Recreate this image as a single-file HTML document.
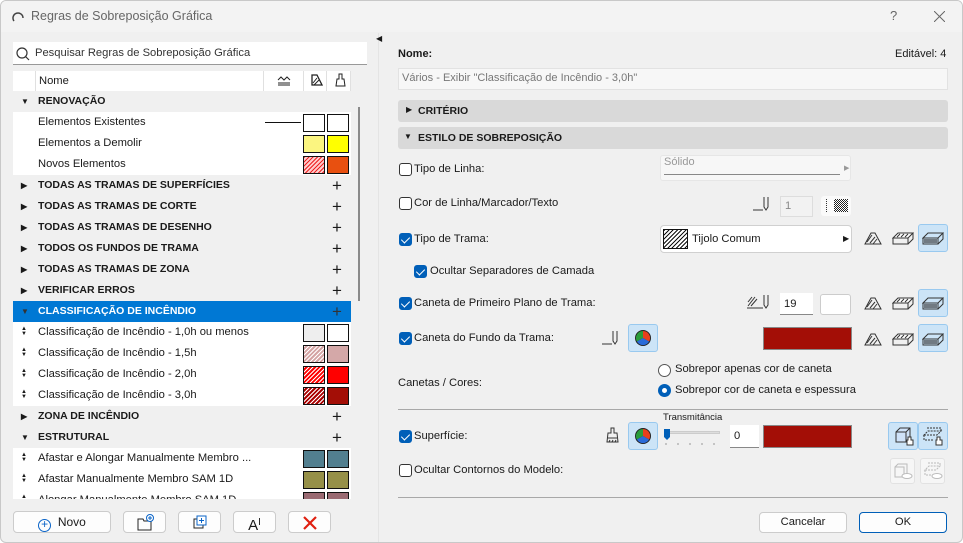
<!DOCTYPE html>
<html><head><meta charset="utf-8"><style>
*{box-sizing:border-box;margin:0;padding:0}
body{width:963px;height:543px;overflow:hidden;background:#fff;font-family:"Liberation Sans",sans-serif;font-size:11.2px;color:#1a1a1a}
.win{position:absolute;left:0;top:0;width:963px;height:543px;background:#f0f0f0;border:1px solid #c8c8c8;border-radius:6px;overflow:hidden}
.a{position:absolute}
.row{position:absolute;left:12px;width:338px;height:21px;line-height:21px}
.g{background:#f0f0f0;font-weight:bold;font-size:10.5px}
.c{background:#fff}
.sel{background:#0078d4;color:#fff;font-weight:bold;font-size:10.5px}
.tri{position:absolute;left:8px;top:0;font-size:8px}
.lbl{position:absolute;left:25px}
.plus{position:absolute;left:319px;top:0;font-size:17px;font-weight:normal}
.sw{position:absolute;top:2px;width:22px;height:18px;border:1px solid #111}
.s1{left:290px}.s2{left:314px}
.ud{position:absolute;left:8px;top:5px;font-size:6px;line-height:5px}
.cb{position:absolute;width:13px;height:13px;border:1px solid #333;border-radius:3px;background:#fff}
.ck{background:#005fb8;border-color:#005fb8}
.ck::after{content:"";position:absolute;left:3px;top:1px;width:4px;height:7px;border:solid #fff;border-width:0 1.5px 1.5px 0;transform:rotate(45deg)}
.t{position:absolute;white-space:nowrap}
.btn{position:absolute;background:#fdfdfd;border:1px solid #ccc;border-radius:4px;text-align:center}
.hl{position:absolute;width:30px;height:28px;background:#cce4f7;border:1px solid #99c9ef;border-radius:3px}
.hatch{background:repeating-linear-gradient(135deg,#111 0 1px,#fff 1px 3px)}
</style></head><body><div class="win">

<div class="a" style="left:0;top:0;width:963px;height:31px;background:#f3f3f3"></div>
<svg class="a" style="left:11px;top:9px" width="12" height="12"><path d="M2 11 A5 5 0 1 1 11 8" fill="none" stroke="#444" stroke-width="1.5"/></svg>
<div class="t" style="left:30px;top:8px;font-size:12.5px;color:#666">Regras de Sobreposição Gráfica</div>
<div class="t" style="left:889px;top:7px;font-size:13px;color:#666">?</div>
<svg class="a" style="left:933px;top:10px" width="11" height="11"><path d="M0 0L11 11M11 0L0 11" stroke="#666" stroke-width="1"/></svg>

<div class="a" style="left:12px;top:41px;width:354px;height:23px;background:#fff;border-bottom:1px solid #999"></div>
<svg class="a" style="left:15px;top:46px" width="14" height="14"><circle cx="6" cy="6" r="5" fill="none" stroke="#333" stroke-width="1.2"/><path d="M9.5 9.5L13 13" stroke="#333" stroke-width="1.2"/></svg>
<div class="t" style="left:34px;top:46px;color:#333">Pesquisar Regras de Sobreposição Gráfica</div>

<div class="a" style="left:12px;top:70px;width:338px;height:20px;background:#fff"></div>
<div class="a" style="left:34px;top:70px;width:1px;height:20px;background:#e0e0e0"></div>
<div class="a" style="left:262px;top:70px;width:1px;height:20px;background:#e0e0e0"></div>
<div class="a" style="left:302px;top:70px;width:1px;height:20px;background:#e0e0e0"></div>
<div class="a" style="left:325px;top:70px;width:1px;height:20px;background:#e0e0e0"></div>
<div class="a" style="left:349px;top:70px;width:1px;height:20px;background:#e0e0e0"></div>
<div class="t" style="left:38px;top:74px">Nome</div>
<svg class="a" style="left:276px;top:74px" width="14" height="11"><path d="M1 5L4 2 7 5 10 2 13 5M1 8H13M1 10H13" fill="none" stroke="#222"/></svg>
<svg class="a" style="left:310px;top:73px" width="12" height="12"><path d="M1 11V1H6L11 11Z" fill="none" stroke="#222" stroke-width="1.3"/><path d="M2 9L6 4M3 11L8 6" stroke="#222"/></svg>
<svg class="a" style="left:334px;top:72px" width="11" height="14"><path d="M4 1H7V6H9L10 13H1L2 6H4Z" fill="none" stroke="#222"/></svg>

<div class="row g" style="top:90px"><span class="tri">▼</span><span class="lbl">RENOVAÇÃO</span></div>
<div class="row c" style="top:111px"><span class="lbl">Elementos Existentes</span><div class="a" style="left:252px;top:10px;width:36px;height:1px;background:#111"></div><div class="sw s1"></div><div class="sw s2"></div></div>
<div class="row c" style="top:132px"><span class="lbl">Elementos a Demolir</span><div class="sw s1" style="background:#fbf580"></div><div class="sw s2" style="background:#ffff00"></div></div>
<div class="row c" style="top:153px"><span class="lbl">Novos Elementos</span><div class="sw s1" style="background:repeating-linear-gradient(135deg,#e22 0 1px,#fcc 1px 3px)"></div><div class="sw s2" style="background:#e85010"></div></div>
<div class="row g" style="top:174px"><span class="tri">▶</span><span class="lbl">TODAS AS TRAMAS DE SUPERFÍCIES</span><span class="plus">+</span></div>
<div class="row g" style="top:195px"><span class="tri">▶</span><span class="lbl">TODAS AS TRAMAS DE CORTE</span><span class="plus">+</span></div>
<div class="row g" style="top:216px"><span class="tri">▶</span><span class="lbl">TODAS AS TRAMAS DE DESENHO</span><span class="plus">+</span></div>
<div class="row g" style="top:237px"><span class="tri">▶</span><span class="lbl">TODOS OS FUNDOS DE TRAMA</span><span class="plus">+</span></div>
<div class="row g" style="top:258px"><span class="tri">▶</span><span class="lbl">TODAS AS TRAMAS DE ZONA</span><span class="plus">+</span></div>
<div class="row g" style="top:279px"><span class="tri">▶</span><span class="lbl">VERIFICAR ERROS</span><span class="plus">+</span></div>
<div class="row sel" style="top:300px"><span class="tri" style="color:#333">▼</span><span class="lbl">CLASSIFICAÇÃO DE INCÊNDIO</span><span class="plus" style="color:#333">+</span></div>
<div class="row c" style="top:321px"><span class="ud">▲<br>▼</span><span class="lbl">Classificação de Incêndio - 1,0h ou menos</span><div class="sw s1" style="background:#eee"></div><div class="sw s2"></div></div>
<div class="row c" style="top:342px"><span class="ud">▲<br>▼</span><span class="lbl">Classificação de Incêndio - 1,5h</span><div class="sw s1" style="background:repeating-linear-gradient(135deg,#fff 0 1px,#d4a4a4 1px 3px)"></div><div class="sw s2" style="background:#d4a8a8"></div></div>
<div class="row c" style="top:363px"><span class="ud">▲<br>▼</span><span class="lbl">Classificação de Incêndio - 2,0h</span><div class="sw s1" style="background:repeating-linear-gradient(135deg,#fff 0 1px,#f00 1px 3px)"></div><div class="sw s2" style="background:#f00"></div></div>
<div class="row c" style="top:384px"><span class="ud">▲<br>▼</span><span class="lbl">Classificação de Incêndio - 3,0h</span><div class="sw s1" style="background:repeating-linear-gradient(135deg,#fff 0 1px,#a00 1px 3px)"></div><div class="sw s2" style="background:#a30e06"></div></div>
<div class="row g" style="top:405px"><span class="tri">▶</span><span class="lbl">ZONA DE INCÊNDIO</span><span class="plus">+</span></div>
<div class="row g" style="top:426px"><span class="tri">▼</span><span class="lbl">ESTRUTURAL</span><span class="plus">+</span></div>
<div class="row c" style="top:447px"><span class="ud">▲<br>▼</span><span class="lbl">Afastar e Alongar Manualmente Membro ...</span><div class="sw s1" style="background:#527f8f"></div><div class="sw s2" style="background:#527f8f"></div></div>
<div class="row c" style="top:468px"><span class="ud">▲<br>▼</span><span class="lbl">Afastar Manualmente Membro SAM 1D</span><div class="sw s1" style="background:#969048"></div><div class="sw s2" style="background:#969048"></div></div>
<div class="a" style="left:12px;top:489px;width:338px;height:9px;overflow:hidden"><div class="row c" style="left:0;top:0"><span class="ud">▲<br>▼</span><span class="lbl">Alongar Manualmente Membro SAM 1D</span><div class="sw s1" style="background:#9a6a72"></div><div class="sw s2" style="background:#9a6a72"></div></div></div>
<div class="a" style="left:357px;top:106px;width:2px;height:194px;background:#8a8a8a"></div>

<div class="btn" style="left:12px;top:510px;width:98px;height:22px;line-height:20px;font-size:12px"><span style="display:inline-block;width:13px;height:13px;border:1.3px solid #0a64c8;border-radius:50%;color:#0a64c8;font-size:12px;line-height:9px;vertical-align:-2px">+</span>&nbsp; Novo</div>
<div class="btn" style="left:122px;top:510px;width:43px;height:22px"><svg width="20" height="18" style="margin-top:1px"><path d="M3 6H8L9 8H16V17H3Z" fill="none" stroke="#222"/><circle cx="15" cy="5" r="3.5" fill="#fff" stroke="#0a64c8"/><path d="M15 3V7M13 5H17" stroke="#0a64c8"/></svg></div>
<div class="btn" style="left:177px;top:510px;width:43px;height:22px"><svg width="18" height="18" style="margin-top:1px"><rect x="3" y="6" width="9" height="9" fill="none" stroke="#222"/><rect x="6" y="3" width="9" height="9" fill="#fff" stroke="#0a64c8"/><path d="M10.5 5V10M8 7.5H13" stroke="#0a64c8"/></svg></div>
<div class="btn" style="left:232px;top:510px;width:43px;height:22px;font-size:15px;line-height:22px">A<span style="font-size:10px;vertical-align:5px">I</span></div>
<div class="btn" style="left:287px;top:510px;width:43px;height:22px"><svg width="16" height="16" style="margin-top:3px"><path d="M2 2L14 14M14 2L2 14" stroke="#e02010" stroke-width="2.2"/></svg></div>

<div class="a" style="left:377px;top:32px;width:1px;height:511px;background:#e4e4e4"></div>
<div class="t" style="left:375px;top:33px;font-size:8px">◀</div>

<div class="t" style="left:397px;top:47px;font-weight:bold;font-size:11px">Nome:</div>
<div class="t" style="left:894px;top:47px;font-size:11px">Editável: 4</div>
<div class="a" style="left:397px;top:67px;width:550px;height:22px;background:#f7f7f7;border:1px solid #e2e2e2"></div>
<div class="t" style="left:401px;top:71px;color:#777;font-size:11px">Vários - Exibir "Classificação de Incêndio - 3,0h"</div>
<div class="a" style="left:397px;top:99px;width:550px;height:22px;background:#d9d9d9;border-radius:3px"></div>
<div class="t" style="left:405px;top:104px;font-size:8px">▶</div>
<div class="t" style="left:417px;top:104px;font-weight:bold;font-size:10.5px">CRITÉRIO</div>
<div class="a" style="left:397px;top:126px;width:550px;height:22px;background:#d9d9d9;border-radius:3px"></div>
<div class="t" style="left:403px;top:131px;font-size:8px">▼</div>
<div class="t" style="left:417px;top:131px;font-weight:bold;font-size:10.5px">ESTILO DE SOBREPOSIÇÃO</div>

<div class="cb" style="left:398px;top:162px"></div><div class="t" style="left:413px;top:162px">Tipo de Linha:</div>
<div class="a" style="left:659px;top:154px;width:191px;height:26px;background:#f7f7f7;border:1px solid #e6e6e6;border-radius:3px"></div>
<div class="t" style="left:663px;top:155px;color:#999;font-size:11px">Sólido</div>
<div class="a" style="left:663px;top:173px;width:176px;height:1px;background:#888"></div>
<div class="t" style="left:843px;top:163px;font-size:7px;color:#999">▶</div>

<div class="cb" style="left:398px;top:196px"></div><div class="t" style="left:413px;top:196px">Cor de Linha/Marcador/Texto</div>
<svg class="a" style="left:752px;top:195px" width="20" height="16"><path d="M0 14H10M11 1V11L13 14 15 11V1" fill="none" stroke="#333"/></svg>
<div class="a" style="left:779px;top:195px;width:33px;height:21px;background:#f2f2f2;border:1px solid #ddd"></div>
<div class="t" style="left:784px;top:199px;color:#888">1</div>
<div class="a" style="left:820px;top:195px;width:30px;height:20px;background:#fafafa;border-radius:3px"></div>
<div class="a" style="left:825px;top:198px;width:1px;height:13px;border-left:1px dotted #333"></div>
<div class="a" style="left:833px;top:198px;width:14px;height:13px;background:repeating-conic-gradient(#222 0 25%,#fff 0 50%) 0 0/2px 2px"></div>

<div class="cb ck" style="left:398px;top:232px"></div><div class="t" style="left:413px;top:232px">Tipo de Trama:</div>
<div class="a" style="left:659px;top:224px;width:192px;height:28px;background:#fff;border:1px solid #d0d0d0;border-radius:4px"></div>
<div class="a hatch" style="left:662px;top:228px;width:25px;height:20px;border:1px solid #111"></div>
<div class="t" style="left:691px;top:232px">Tijolo Comum</div>
<div class="t" style="left:842px;top:233px;font-size:8px">▶</div>

<div class="cb ck" style="left:413px;top:264px"></div><div class="t" style="left:429px;top:264px">Ocultar Separadores de Camada</div>

<div class="cb ck" style="left:398px;top:296px"></div><div class="t" style="left:413px;top:296px">Caneta de Primeiro Plano de Trama:</div>
<svg class="a" style="left:746px;top:293px" width="30" height="16"><path d="M1 8L5 3M1 12L8 3M4 12L10 5M0 14H16M17 1V11L19 14 21 11V1" fill="none" stroke="#333"/></svg>
<div class="a" style="left:779px;top:292px;width:33px;height:22px;background:#fff;border-bottom:1px solid #888"></div>
<div class="t" style="left:783px;top:297px">19</div>
<div class="a" style="left:819px;top:293px;width:31px;height:21px;background:#fff;border:1px solid #ccc;border-radius:3px"></div>

<div class="cb ck" style="left:398px;top:331px"></div><div class="t" style="left:413px;top:331px">Caneta do Fundo da Trama:</div>
<svg class="a" style="left:601px;top:329px" width="22" height="16"><path d="M0 14H10M11 1V11L13 14 15 11V1" fill="none" stroke="#333"/></svg>
<div class="hl" style="left:627px;top:323px"></div>
<svg class="a" style="left:633px;top:328px" width="18" height="18"><circle cx="9" cy="9" r="8" fill="#222"/><path d="M9 9V2A7 7 0 0 0 2.9 12.5Z" fill="#2a9d3a"/><path d="M9 9V2A7 7 0 0 1 15.1 12.5Z" fill="#e8401c"/><path d="M9 9L15.1 12.5A7 7 0 0 1 2.9 12.5Z" fill="#2a6bd8"/></svg>
<div class="a" style="left:762px;top:326px;width:89px;height:23px;background:#a30e06;border:1px solid #888"></div>

<svg class="a" style="left:862px;top:229px" width="20" height="16"><path d="M2 14L8 3H12L18 14Z" fill="none" stroke="#333"/><path d="M4 12L9 5M7 13L12 7M10 14L14 9" stroke="#333"/></svg>
<svg class="a" style="left:891px;top:231px" width="22" height="13"><path d="M1 6H16L21 1H6Z" fill="#fff" stroke="#333"/><path d="M1 6V12H16V6M16 12L21 7V1" fill="none" stroke="#333"/><path d="M5 5L8 2M9 5L12 2M13 5L16 2" stroke="#333"/></svg>
<div class="hl" style="left:917px;top:223px"></div>
<svg class="a" style="left:921px;top:231px" width="22" height="13"><path d="M1 6H16L21 1H6Z" fill="none" stroke="#333"/><path d="M1 6V12H16V6M16 12L21 7V1" fill="none" stroke="#333"/><rect x="2" y="7" width="13" height="4" fill="#333" opacity=".6"/></svg>

<svg class="a" style="left:862px;top:294px" width="20" height="16"><path d="M2 14L8 3H12L18 14Z" fill="none" stroke="#333"/><path d="M4 12L9 5M7 13L12 7M10 14L14 9" stroke="#333"/></svg>
<svg class="a" style="left:891px;top:296px" width="22" height="13"><path d="M1 6H16L21 1H6Z" fill="#fff" stroke="#333"/><path d="M1 6V12H16V6M16 12L21 7V1" fill="none" stroke="#333"/><path d="M5 5L8 2M9 5L12 2M13 5L16 2" stroke="#333"/></svg>
<div class="hl" style="left:917px;top:288px"></div>
<svg class="a" style="left:921px;top:296px" width="22" height="13"><path d="M1 6H16L21 1H6Z" fill="none" stroke="#333"/><path d="M1 6V12H16V6M16 12L21 7V1" fill="none" stroke="#333"/><rect x="2" y="7" width="13" height="4" fill="#333" opacity=".6"/></svg>

<svg class="a" style="left:862px;top:330px" width="20" height="16"><path d="M2 14L8 3H12L18 14Z" fill="none" stroke="#333"/><path d="M4 12L9 5M7 13L12 7M10 14L14 9" stroke="#333"/></svg>
<svg class="a" style="left:891px;top:332px" width="22" height="13"><path d="M1 6H16L21 1H6Z" fill="#fff" stroke="#333"/><path d="M1 6V12H16V6M16 12L21 7V1" fill="none" stroke="#333"/><path d="M5 5L8 2M9 5L12 2M13 5L16 2" stroke="#333"/></svg>
<div class="hl" style="left:917px;top:323px"></div>
<svg class="a" style="left:921px;top:332px" width="22" height="13"><path d="M1 6H16L21 1H6Z" fill="none" stroke="#333"/><path d="M1 6V12H16V6M16 12L21 7V1" fill="none" stroke="#333"/><rect x="2" y="7" width="13" height="4" fill="#333" opacity=".6"/></svg>

<div class="t" style="left:397px;top:376px">Canetas / Cores:</div>
<div class="a" style="left:657px;top:363px;width:13px;height:13px;border:1px solid #555;border-radius:50%;background:#fff"></div>
<div class="t" style="left:674px;top:362px">Sobrepor apenas cor de caneta</div>
<div class="a" style="left:657px;top:383px;width:13px;height:13px;border-radius:50%;background:#005fb8"></div>
<div class="a" style="left:661px;top:387px;width:5px;height:5px;border-radius:50%;background:#fff"></div>
<div class="t" style="left:674px;top:383px">Sobrepor cor de caneta e espessura</div>
<div class="a" style="left:397px;top:408px;width:550px;height:1px;background:#a8a8a8"></div>

<div class="cb ck" style="left:398px;top:429px"></div><div class="t" style="left:413px;top:429px">Superfície:</div>
<svg class="a" style="left:604px;top:426px" width="16" height="17"><path d="M6 1H9V6H12L13 15H2L3 6H6Z" fill="none" stroke="#333"/><path d="M3 11H12M4 15L5 13M7 15L8 13M10 15L11 13" stroke="#333"/></svg>
<div class="hl" style="left:627px;top:421px"></div>
<svg class="a" style="left:633px;top:426px" width="18" height="18"><circle cx="9" cy="9" r="8" fill="#222"/><path d="M9 9V2A7 7 0 0 0 2.9 12.5Z" fill="#2a9d3a"/><path d="M9 9V2A7 7 0 0 1 15.1 12.5Z" fill="#e8401c"/><path d="M9 9L15.1 12.5A7 7 0 0 1 2.9 12.5Z" fill="#2a6bd8"/></svg>
<div class="t" style="left:662px;top:411px;font-size:9.5px">Transmitância</div>
<div class="a" style="left:663px;top:430px;width:56px;height:3px;background:#ddd;border:1px solid #ccc"></div>
<svg class="a" style="left:662px;top:427px" width="60" height="18"><path d="M1 1H7V9L4 12 1 9Z" fill="#005fb8"/><path d="M3 15V17M15 15V17M27 15V17M39 15V17M51 15V17" stroke="#999"/></svg>
<div class="a" style="left:729px;top:424px;width:29px;height:23px;background:#fff;border-bottom:1px solid #888"></div>
<div class="t" style="left:733px;top:429px">0</div>
<div class="a" style="left:762px;top:424px;width:89px;height:23px;background:#a30e06;border:1px solid #888"></div>
<div class="hl" style="left:887px;top:421px"></div>
<svg class="a" style="left:892px;top:425px" width="22" height="20"><path d="M3 6H13V16H3Z M3 6L7 2H17V12L13 16 M13 6L17 2" fill="#cfe2f8" stroke="#333"/><path d="M15 11H18V14H20V19H14V14H15Z" fill="#fff" stroke="#333"/></svg>
<div class="hl" style="left:917px;top:421px"></div>
<svg class="a" style="left:921px;top:425px" width="22" height="20"><path d="M2 9H15L19 5H6Z M2 9V14H12 M5 2H19V5" fill="none" stroke="#333" stroke-dasharray="2 1"/><path d="M15 11H18V14H20V19H14V14H15Z" fill="#fff" stroke="#333"/></svg>

<div class="cb" style="left:398px;top:463px"></div><div class="t" style="left:413px;top:463px">Ocultar Contornos do Modelo:</div>
<div class="a" style="left:889px;top:457px;width:25px;height:26px;background:#f6f6f6;border:1px solid #e2e2e2;border-radius:3px"></div>
<div class="a" style="left:919px;top:457px;width:25px;height:26px;background:#f6f6f6;border:1px solid #e2e2e2;border-radius:3px"></div>
<svg class="a" style="left:892px;top:461px" width="20" height="18"><path d="M2 5H11V15H2Z M2 5L5 2H14V11L11 15" fill="none" stroke="#bbb"/><ellipse cx="14" cy="14" rx="5" ry="2.5" fill="#fff" stroke="#bbb"/></svg>
<svg class="a" style="left:922px;top:461px" width="20" height="18"><path d="M2 8H13L17 4H6Z M2 8V13H10 M5 1H17V4" fill="none" stroke="#bbb" stroke-dasharray="2 1"/><ellipse cx="14" cy="14" rx="5" ry="2.5" fill="#fff" stroke="#bbb"/></svg>
<div class="a" style="left:397px;top:496px;width:550px;height:1px;background:#a8a8a8"></div>

<div class="btn" style="left:758px;top:511px;width:88px;height:21px;line-height:19px">Cancelar</div>
<div class="btn" style="left:858px;top:511px;width:88px;height:21px;line-height:19px;border-color:#005fb8">OK</div>
</div></body></html>
